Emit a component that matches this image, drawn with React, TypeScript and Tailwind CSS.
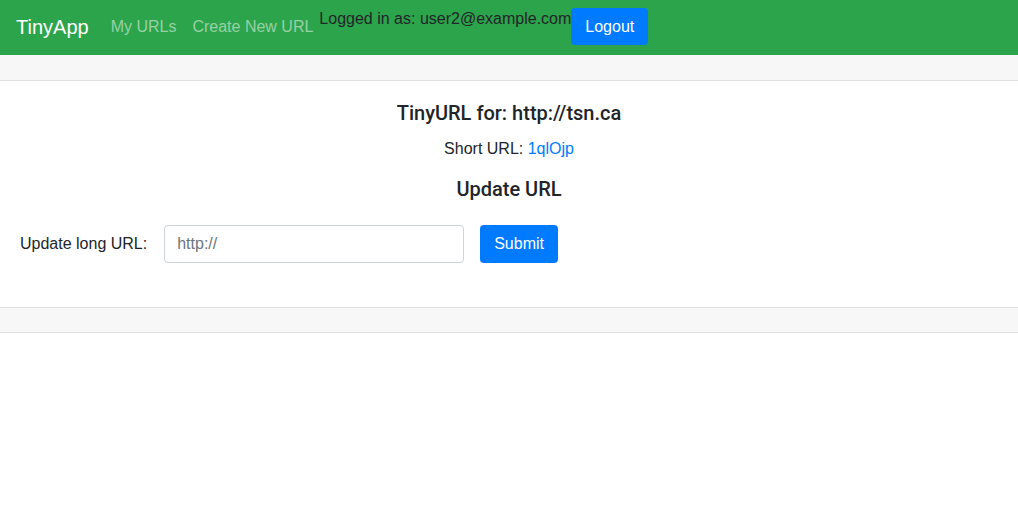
export default function App() {
  return (
    <div className="min-h-[508px] bg-white text-[#212529] font-['Liberation_Sans',Arial,sans-serif]">
      {/* Navbar */}
      <nav className="h-[55px] bg-[#2ca44b] px-4 flex items-start">
        <span className="text-white text-[20px] leading-[30px] mt-[12px] mr-[22px]">TinyApp</span>
        <a className="text-white/50 text-base leading-6 mt-[15px] mr-4">My URLs</a>
        <a className="text-white/50 text-base leading-6 mt-[15px] mr-[6px]">Create New URL</a>
        <span className="text-[#212529] text-base leading-6 mt-[7px]">Logged in as: user2@example.com</span>
        <button className="mt-[8px] h-[37px] px-[14px] rounded bg-[#007bff] text-white text-base leading-6">Logout</button>
      </nav>

      {/* Card */}
      <div className="border-b border-[#dfdfdf]">
        <div className="h-[26px] bg-[#f7f7f7] border-b border-[#dfdfdf]" />
        <div className="px-5 pt-5 pb-[44px] text-center">
          <h5 className="font-['Roboto',Arial,sans-serif] text-[20px] font-medium leading-6 mb-3">TinyURL for: http://tsn.ca</h5>
          <p className="text-base leading-6 mb-4">
            Short URL: <a className="text-[#007bff]">1qlOjp</a>
          </p>
          <h5 className="font-['Roboto',Arial,sans-serif] text-[20px] font-medium leading-6 mb-6">Update URL</h5>
          <form className="flex items-center text-left" onSubmit={e => e.preventDefault()}>
            <label className="text-base mr-4">Update long URL:</label>
            <input
              className="w-[300px] h-[38px] px-3 border border-[#ced4da] rounded text-base text-[#495057] placeholder:text-[#6c757d] ml-px mr-4"
              placeholder="http://"
            />
            <button className="h-[38px] px-[14px] rounded bg-[#007bff] text-white text-base">Submit</button>
          </form>
        </div>
        <div className="h-[25px] bg-[#f7f7f7] border-t border-[#dfdfdf]" />
      </div>
    </div>
  )
}
